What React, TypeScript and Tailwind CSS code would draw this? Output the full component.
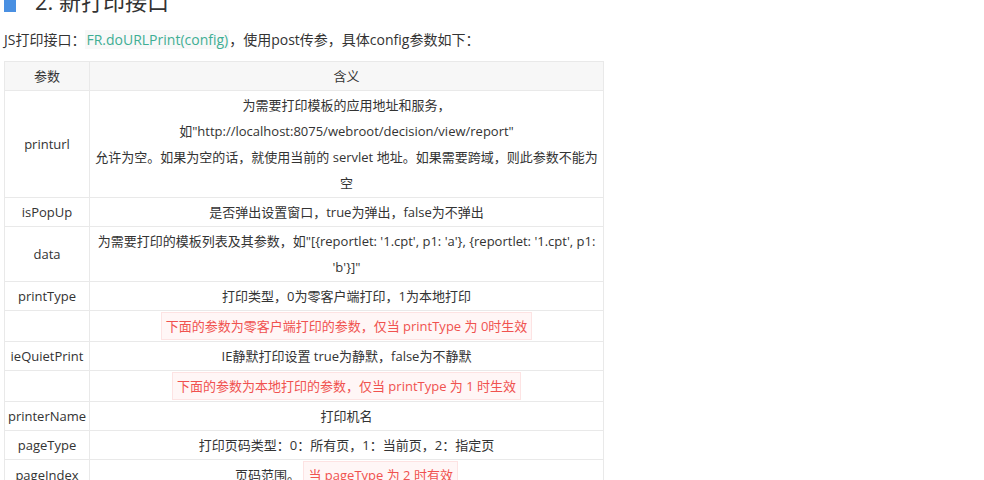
const font = { fontFamily: '"Open Sans", "Noto Sans CJK SC", sans-serif' }

function Warn({ children }: { children: React.ReactNode }) {
  return (
    <span className="inline-block border border-[#fde3e3] bg-[#fff6f6] px-[4px] py-[2px] leading-[22px] text-[#f0524f]">
      {children}
    </span>
  )
}

const rows: { name: string; desc: React.ReactNode }[] = [
  {
    name: 'printurl',
    desc: (
      <>
        为需要打印模板的应用地址和服务，
        <br />
        如"http://localhost:8075/webroot/decision/view/report"
        <br />
        允许为空。如果为空的话，就使用当前的 servlet 地址。如果需要跨域，则此参数不能为空
      </>
    ),
  },
  { name: 'isPopUp', desc: '是否弹出设置窗口，true为弹出，false为不弹出' },
  { name: 'data', desc: "为需要打印的模板列表及其参数，如\"[{reportlet: '1.cpt', p1: 'a'}, {reportlet: '1.cpt', p1: 'b'}]\"" },
  { name: 'printType', desc: '打印类型，0为零客户端打印，1为本地打印' },
  { name: '', desc: <Warn>下面的参数为零客户端打印的参数，仅当 printType 为 0时生效</Warn> },
  { name: 'ieQuietPrint', desc: 'IE静默打印设置 true为静默，false为不静默' },
  { name: '', desc: <Warn>下面的参数为本地打印的参数，仅当 printType 为 1 时生效</Warn> },
  { name: 'printerName', desc: '打印机名' },
  { name: 'pageType', desc: '打印页码类型：0：所有页，1：当前页，2：指定页' },
  {
    name: 'pageIndex',
    desc: (
      <>
        页码范围。 <Warn>当 pageType 为 2 时有效</Warn>
      </>
    ),
  },
]

export default function App() {
  return (
    <main className="h-[480px] overflow-hidden bg-white px-1 text-[#333]" style={font}>
      <div className="mt-[-14px] flex items-center gap-[19px]">
        <span className="h-[22px] w-[12px] bg-[#4a90e2]" />
        <h2 className="text-[22px] leading-[30px] text-[#333]">2. 新打印接口</h2>
      </div>
      <p className="mt-[13px] text-[14px] leading-[22px]">
        JS打印接口：
        <code className="bg-[#f8f8f8] px-[1px] text-[#3fae94]" style={font}>
          FR.doURLPrint(config)
        </code>
        ，使用post传参，具体config参数如下：
      </p>
      <table className="mt-[10px] w-[600px] border-collapse text-[13px] leading-[26px]">
        <thead>
          <tr className="bg-[#f7f7f7]">
            <th className="w-[85px] border border-[#e9e9e9] px-[2px] py-[1px] font-normal">参数</th>
            <th className="border border-[#e9e9e9] px-[3px] py-[1px] font-normal">含义</th>
          </tr>
        </thead>
        <tbody>
          {rows.map((r, i) => (
            <tr key={i}>
              <td className="border border-[#e9e9e9] px-[2px] py-[1px] text-center">{r.name}</td>
              <td className="border border-[#e9e9e9] px-[3px] py-[1px] text-center">{r.desc}</td>
            </tr>
          ))}
        </tbody>
      </table>
    </main>
  )
}
